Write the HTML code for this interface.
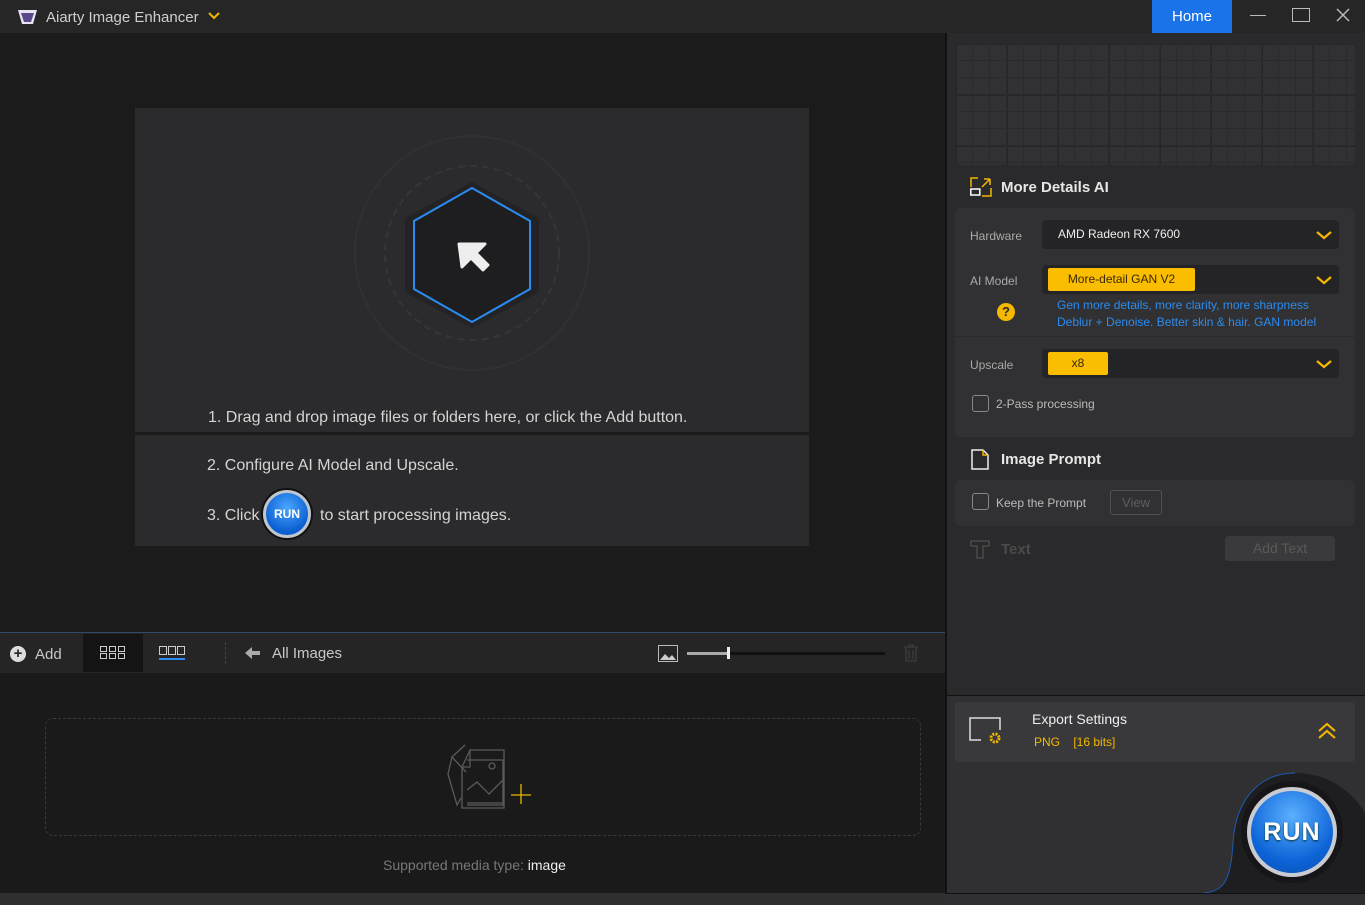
<!DOCTYPE html>
<html><head><meta charset="utf-8"><style>
*{box-sizing:border-box;margin:0;padding:0}
body{width:1365px;height:905px;overflow:hidden;background:#1b1b1b;font-family:"Liberation Sans",sans-serif;position:relative;color:#ddd}
.a{position:absolute}
.t{font-size:13px;color:#c8c8c8;white-space:nowrap}
</style></head><body>
<!-- title bar -->
<div class="a" style="left:0;top:0;width:1365px;height:33px;background:#262626"></div>
<svg class="a" style="left:17px;top:8px" width="22" height="18"><polygon points="1,2 20,2 16,16 5,16" fill="#e8e4f4"/><polygon points="4,5 17,5 14,14 7,14" fill="#5b4a8a"/></svg>
<div class="a t" style="left:46px;top:9px;font-size:15px;color:#cfcfcf">Aiarty Image Enhancer</div>
<svg class="a" style="left:208px;top:12px" width="12" height="8"><path d="M1 1l5 5 5-5" stroke="#f5b800" stroke-width="2" fill="none"/></svg>
<div class="a" style="left:1152px;top:0;width:80px;height:33px;background:#1a73e8;color:#fff;font-size:15px;text-align:center;line-height:33px">Home</div>
<div class="a" style="left:1250px;top:15px;width:16px;height:1px;background:#bbb"></div>
<div class="a" style="left:1292px;top:8px;width:18px;height:14px;border:1.5px solid #bbb"></div>
<svg class="a" style="left:1336px;top:8px" width="14" height="14"><path d="M1 1l12 12M13 1L1 13" stroke="#bbb" stroke-width="1.5"/></svg>

<!-- drop panel -->
<div class="a" style="left:135px;top:108px;width:674px;height:324px;background:#2b2b2d"></div>
<div class="a" style="left:135px;top:435px;width:674px;height:111px;background:#2b2b2d"></div>
<svg class="a" style="left:340px;top:130px" width="260" height="250">
<circle cx="132" cy="123" r="117" fill="none" stroke="#313133" stroke-width="2"/>
<circle cx="132" cy="123" r="87" fill="none" stroke="#363638" stroke-width="2" stroke-dasharray="7 5"/>
<polygon points="132,52 199,88 199,162 132,198 65,162 65,88" fill="#232325"/>
<polygon points="132,58 190,91 190,159 132,192 74,159 74,91" fill="#1e1e20" stroke="#2a8cf0" stroke-width="2"/>
<path d="M119 114h26l-9 9 12 12-5 5-12-12-9 9z" fill="#eee" stroke="#eee" stroke-width="3" stroke-linejoin="round"/>
</svg>
<div class="a t" style="left:208px;top:409px;font-size:16px;color:#d4d4d4">1. Drag and drop image files or folders here, or click the Add button.</div>
<div class="a t" style="left:207px;top:457px;font-size:16px;color:#d4d4d4">2. Configure AI Model and Upscale.</div>
<div class="a t" style="left:207px;top:507px;font-size:16px;color:#d4d4d4">3. Click</div>
<div class="a" style="left:263px;top:490px;width:48px;height:48px;border-radius:50%;background:radial-gradient(circle at 50% 35%,#4aa6ff,#0b5fd0 70%);border:3px solid #bfc6cf;box-shadow:0 0 0 2px #111;color:#fff;font-weight:bold;font-size:12px;text-align:center;line-height:42px">RUN</div>
<div class="a t" style="left:320px;top:507px;font-size:16px;color:#d4d4d4">to start processing images.</div>

<!-- toolbar -->
<div class="a" style="left:0;top:632px;width:945px;height:41px;background:#252525;border-top:1px solid #2f4a66"></div>
<div class="a" style="left:10px;top:646px;width:16px;height:16px;border-radius:50%;background:#ddd;color:#252525;font-size:15px;font-weight:bold;text-align:center;line-height:16px">+</div>
<div class="a t" style="left:35px;top:646px;font-size:15px">Add</div>
<div class="a" style="left:83px;top:634px;width:60px;height:38px;background:#141414"></div>
<svg class="a" style="left:100px;top:646px" width="25" height="13" fill="none" stroke="#ccc"><rect x=".5" y=".5" width="6" height="5"/><rect x="9.5" y=".5" width="6" height="5"/><rect x="18.5" y=".5" width="6" height="5"/><rect x=".5" y="7.5" width="6" height="5"/><rect x="9.5" y="7.5" width="6" height="5"/><rect x="18.5" y="7.5" width="6" height="5"/></svg>
<svg class="a" style="left:159px;top:646px" width="26" height="14" fill="none" stroke="#ccc"><rect x=".5" y=".5" width="7" height="8"/><rect x="9.5" y=".5" width="7" height="8"/><rect x="18.5" y=".5" width="7" height="8"/><line x1="0" y1="13" x2="26" y2="13" stroke="#2a8cf0" stroke-width="2"/></svg>
<div class="a" style="left:225px;top:642px;width:1px;height:22px;border-left:1px dashed #444"></div>
<svg class="a" style="left:245px;top:647px" width="16" height="12"><path d="M0 6l7-6v4h8v4H7v4z" fill="#aaa"/></svg>
<div class="a t" style="left:272px;top:645px;font-size:15px">All Images</div>
<svg class="a" style="left:658px;top:645px" width="20" height="17"><rect x=".5" y=".5" width="19" height="16" fill="none" stroke="#bbb"/><path d="M2 15l5-6 4 4 3-3 4 5z" fill="#ccc"/></svg>
<div class="a" style="left:687px;top:652px;width:198px;height:3px;background:#111"></div>
<div class="a" style="left:687px;top:652px;width:41px;height:3px;background:#aaa"></div>
<div class="a" style="left:727px;top:647px;width:3px;height:12px;background:#eee"></div>
<svg class="a" style="left:904px;top:644px" width="14" height="18" stroke="#444" fill="none"><path d="M0 3h14M5 3V1h4v2M2 4v13h10V4M5 6v9M9 6v9"/></svg>

<!-- bottom area -->
<div class="a" style="left:0;top:673px;width:945px;height:220px;background:#1a1a1a"></div>
<div class="a" style="left:45px;top:718px;width:876px;height:118px;border:1px dashed #3a3a3a;border-radius:8px"></div>
<svg class="a" style="left:445px;top:740px" width="90" height="75" fill="none" stroke="#5a5a5a" stroke-width="1.3">
<path d="M20 5L7 17 3 34 12 65 16 58M7 17l14 15"/>
<path d="M25 10h34v58H17V27z"/><path d="M25 10v17h-8"/>
<path d="M22 20h36v45H22" /><circle cx="47" cy="26" r="3"/><path d="M22 50l10-8 12 12 14-14"/><path d="M22 63h36"/>
<path d="M76 44v20M66 55h20" stroke="#e8b800"/>
</svg>
<div class="a t" style="left:383px;top:857px;font-size:14px;color:#777">Supported media type: <span style="color:#eee">image</span></div>
<div class="a" style="left:0;top:893px;width:945px;height:12px;background:#2f2f2f"></div>

<!-- right panel -->
<div class="a" style="left:945px;top:33px;width:2px;height:872px;background:#111"></div>
<div class="a" style="left:947px;top:33px;width:418px;height:662px;background:#2a2a2c"></div>
<div class="a" style="left:955px;top:43px;width:400px;height:122px;border-radius:6px;background-color:#313133;background-image:linear-gradient(#2a2a2c 1px,transparent 1px),linear-gradient(90deg,#2a2a2c 1px,transparent 1px),linear-gradient(#262628 2px,transparent 2px),linear-gradient(90deg,#262628 2px,transparent 2px);background-size:17px 17px,17px 17px,51px 51px,51px 51px"></div>
<svg class="a" style="left:970px;top:177px" width="22" height="20" fill="none" stroke-width="1.5"><rect x=".8" y="12" width="9" height="6" stroke="#fff"/><path d="M1 10V1h7M12 19h9V11M20 2h-6M20 2v6M20 2l-8 8" stroke="#f5b800"/></svg>
<div class="a t" style="left:1001px;top:179px;font-size:15px;font-weight:bold;color:#e6e6e6">More Details AI</div>
<div class="a" style="left:955px;top:208px;width:400px;height:229px;border-radius:6px;background:#313133"></div>
<div class="a" style="left:955px;top:336px;width:400px;height:1px;background:#2a2a2c"></div>
<div class="a t" style="left:970px;top:229px;font-size:12px;color:#aaa">Hardware</div>
<div class="a" style="left:1042px;top:220px;width:297px;height:29px;border-radius:4px;background:#242426"></div>
<div class="a t" style="left:1058px;top:227px;font-size:12px;color:#eee">AMD Radeon RX 7600</div>
<div class="a t" style="left:970px;top:274px;font-size:12px;color:#aaa">AI Model</div>
<div class="a" style="left:1042px;top:265px;width:297px;height:29px;border-radius:4px;background:#242426"></div>
<div class="a" style="left:1048px;top:268px;width:147px;height:23px;border-radius:2px;background:#fbbd00;color:#3a2a00;font-size:12px;text-align:center;line-height:23px">More-detail GAN V2</div>
<div class="a" style="left:997px;top:303px;width:18px;height:18px;border-radius:50%;background:#f5b800;color:#2a2a2a;font-weight:bold;font-size:13px;text-align:center;line-height:18px">?</div>
<div class="a t" style="left:1057px;top:297px;font-size:12px;color:#2a8cf0;line-height:17px">Gen more details, more clarity, more sharpness<br>Deblur + Denoise. Better skin &amp; hair. GAN model</div>
<div class="a t" style="left:970px;top:358px;font-size:12px;color:#aaa">Upscale</div>
<div class="a" style="left:1042px;top:349px;width:297px;height:29px;border-radius:4px;background:#242426"></div>
<div class="a" style="left:1048px;top:352px;width:60px;height:23px;border-radius:2px;background:#fbbd00;color:#3a2a00;font-size:12px;text-align:center;line-height:23px">x8</div>
<svg class="a" style="left:1316px;top:230px" width="16" height="150" fill="none" stroke="#f5b800" stroke-width="2.2"><path d="M1 2l7 6 7-6M1 47l7 6 7-6M1 131l7 6 7-6"/></svg>
<div class="a" style="left:972px;top:395px;width:17px;height:17px;border:1.3px solid #888;border-radius:3px"></div>
<div class="a t" style="left:996px;top:397px;font-size:12px;color:#bbb">2-Pass processing</div>
<svg class="a" style="left:971px;top:449px" width="18" height="21" fill="none" stroke-width="1.5"><path d="M1 1h11l5 5v14H1z" stroke="#eee"/><path d="M12 1v5h5" stroke="#f5b800"/></svg>
<div class="a t" style="left:1001px;top:451px;font-size:15px;font-weight:bold;color:#e6e6e6">Image Prompt</div>
<div class="a" style="left:955px;top:480px;width:400px;height:46px;border-radius:6px;background:#313133"></div>
<div class="a" style="left:972px;top:493px;width:17px;height:17px;border:1.3px solid #888;border-radius:3px"></div>
<div class="a t" style="left:996px;top:496px;font-size:12px;color:#bbb">Keep the Prompt</div>
<div class="a" style="left:1110px;top:490px;width:52px;height:25px;border:1px solid #505050;border-radius:3px;color:#5f5f5f;font-size:13px;text-align:center;line-height:23px">View</div>
<svg class="a" style="left:970px;top:540px" width="20" height="19" fill="none" stroke="#4a4a4a" stroke-width="1.5"><path d="M1 1h18v5h-6v12H7V6H1z"/></svg>
<div class="a t" style="left:1001px;top:541px;font-size:15px;font-weight:bold;color:#4a4a4a">Text</div>
<div class="a" style="left:1225px;top:536px;width:110px;height:25px;border-radius:3px;background:#3a3a3c;color:#5a5a5a;font-size:14px;text-align:center;line-height:25px">Add Text</div>

<!-- export -->
<div class="a" style="left:947px;top:695px;width:418px;height:210px;background:#303032;border-top:1px solid #111"></div>
<div class="a" style="left:955px;top:702px;width:400px;height:60px;border-radius:4px;background:#39393b"></div>
<svg class="a" style="left:969px;top:717px" width="36" height="30" fill="none"><path d="M12 23H1V1h30v12" stroke="#ddd" stroke-width="1.5"/><circle cx="26" cy="21" r="4" stroke="#f5b800" stroke-width="3" stroke-dasharray="2 1.2"/></svg>
<div class="a t" style="left:1032px;top:711px;font-size:14px;color:#eee">Export Settings</div>
<div class="a t" style="left:1034px;top:735px;font-size:12px;color:#f5b800">PNG&nbsp;&nbsp;&nbsp;&nbsp;[16 bits]</div>
<svg class="a" style="left:1318px;top:722px" width="18" height="18" fill="none" stroke="#f5b800" stroke-width="2"><path d="M1 9l8-7 8 7M1 16l8-7 8 7"/></svg>
<svg class="a" style="left:1195px;top:768px" width="170" height="126">
<path d="M8 125C30 124 36 110 38 75 41 25 70 5 100 5 130 5 155 20 170 45V125z" fill="#1e1e20"/>
<path d="M8 125C30 124 36 110 38 75 41 25 70 5 100 5" fill="none" stroke="#1d5bb0" stroke-width="1"/>
</svg>
<div class="a" style="left:945px;top:893px;width:420px;height:12px;background:#303032;border-top:1px solid #111"></div>
<div class="a" style="left:1241px;top:781px;width:102px;height:102px;border-radius:50%;background:#161618"></div>
<div class="a" style="left:1247px;top:787px;width:90px;height:90px;border-radius:50%;background:radial-gradient(circle at 50% 30%,#5ab0ff,#0d63d6 65%,#0a4fb0);border:4px solid #c8ccd2;color:#fff;font-weight:bold;font-size:25px;text-align:center;line-height:82px;letter-spacing:1px;text-shadow:0 1px 2px #033">RUN</div>
</body></html>
